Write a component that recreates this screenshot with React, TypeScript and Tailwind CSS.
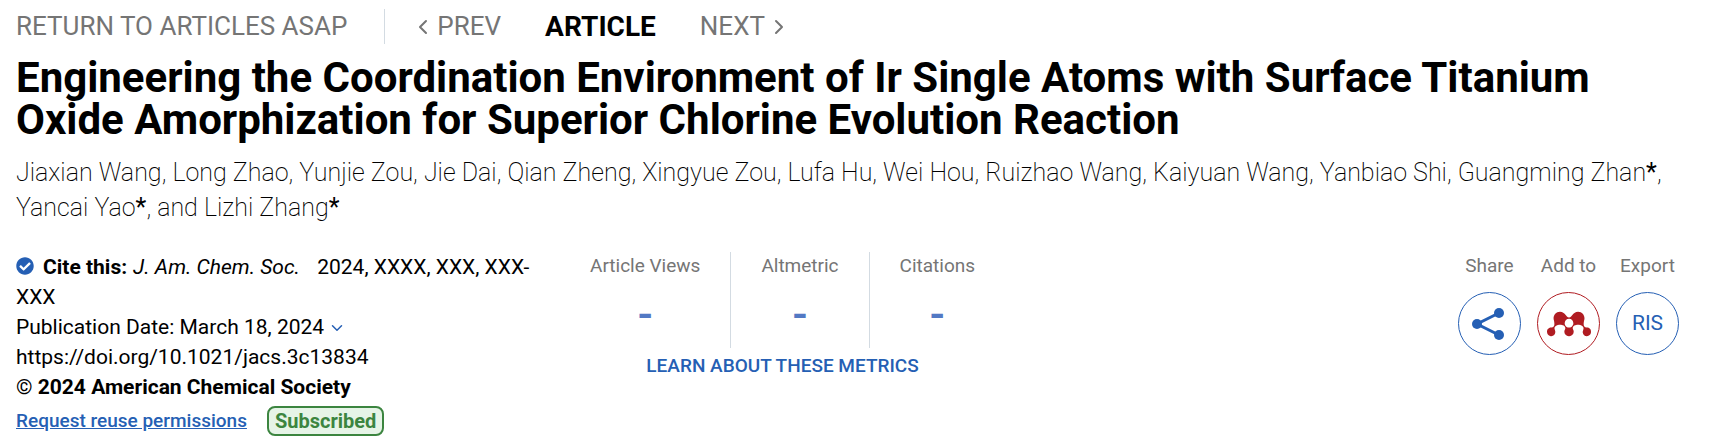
import { FaCheckCircle, FaMendeley } from "react-icons/fa";
import { ChevronDown, ChevronLeft, ChevronRight } from "lucide-react";

const authors = [
    { name: "Jiaxian Wang" },
    { name: "Long Zhao" },
    { name: "Yunjie Zou" },
    { name: "Jie Dai" },
    { name: "Qian Zheng" },
    { name: "Xingyue Zou" },
    { name: "Lufa Hu" },
    { name: "Wei Hou" },
    { name: "Ruizhao Wang" },
    { name: "Kaiyuan Wang" },
    { name: "Yanbiao Shi" },
    { name: "Guangming Zhan", corresponding: true },
    { name: "Yancai Yao", corresponding: true },
    { name: "Lizhi Zhang", corresponding: true },
];

const metrics = ["Article Views", "Altmetric", "Citations"];

function ShareIcon() {
    return (
        <svg viewBox="0 0 36 36" className="h-9 w-9" fill="currentColor" aria-hidden="true">
            <path d="M27 7 5 18l22 11" fill="none" stroke="currentColor" strokeWidth="3" />
            <circle cx="27" cy="7" r="5" />
            <circle cx="5" cy="18" r="5" />
            <circle cx="27" cy="29" r="5" />
        </svg>
    );
}

function ArticleNav() {
    return (
        <nav className="flex h-[35px] items-center text-[26px] leading-[35px] text-[#757575]">
            <a href="#asap">RETURN TO ARTICLES ASAP</a>
            <span className="ml-[37px] h-full w-px bg-[#d3dbe2]" />
            <a href="#prev" className="ml-[26px] flex items-center gap-[2px]">
                <ChevronLeft className="h-6 w-6" strokeWidth={2} />
                PREV
            </a>
            <span className="ml-11 text-[28px] font-bold text-black">ARTICLE</span>
            <a href="#next" className="ml-11 flex items-center gap-[2px]">
                NEXT
                <ChevronRight className="h-6 w-6" strokeWidth={2} />
            </a>
        </nav>
    );
}

function Citation() {
    return (
        <div className="w-[544px] pr-5 text-[21px] leading-[30px]">
            <p>
                <FaCheckCircle className="mr-[9px] inline h-[18px] w-[18px] align-[-1px] text-[#255fb4]" />
                <strong className="font-bold">Cite this:</strong>
                <em className="ml-[6px]">J. Am. Chem. Soc.</em>
                <span className="ml-3"> 2024, XXXX, XXX, XXX-XXX</span>
            </p>
            <p>
                Publication Date: March 18, 2024
                <button type="button" aria-label="Publication history" className="ml-1 text-[#255fb4]">
                    <ChevronDown className="inline h-[18px] w-[18px]" strokeWidth={2} />
                </button>
            </p>
            <p>
                <a href="https://doi.org/10.1021/jacs.3c13834">https://doi.org/10.1021/jacs.3c13834</a>
            </p>
            <p>
                © <strong className="font-bold">2024 American Chemical Society</strong>
            </p>
            <div className="mt-1 flex items-center">
                <a href="#permissions" className="text-[19px] font-medium text-[#255fb4] underline">
                    Request reuse permissions
                </a>
                <span className="ml-5 rounded-lg border-2 border-[#3c8540] bg-[#e6f4e7] px-[6px] text-[20px] leading-[26px] font-bold text-[#3c8540]">
                    Subscribed
                </span>
            </div>
        </div>
    );
}

function Metrics() {
    return (
        <div className="flex flex-col items-center">
            <dl className="flex divide-x divide-[#d3dbe2]">
                {metrics.map((label) => (
                    <div key={label} className="flex h-24 flex-col items-center px-[30px]">
                        <dt className="text-[19px] leading-[27px] text-[#757575]">{label}</dt>
                        <dd className="mt-3 text-[44px] leading-[46px] font-medium text-[#5379c4]">-</dd>
                    </div>
                ))}
            </dl>
            <a href="#metrics" className="mt-1 text-[19px] leading-[28px] font-medium text-[#255fb4]">
                LEARN ABOUT THESE METRICS
            </a>
        </div>
    );
}

function Actions() {
    const circle = "flex h-[63px] w-[63px] items-center justify-center rounded-full border";
    return (
        <div className="ml-auto flex gap-4 text-[19px] leading-[27px] text-[#757575]">
            <div className="flex flex-col items-center gap-[13px]">
                <span id="share">Share</span>
                <button type="button" aria-labelledby="share" className={`${circle} border-[#255fb4] text-[#255fb4]`}>
                    <ShareIcon />
                </button>
            </div>
            <div className="flex flex-col items-center gap-[13px]">
                <span id="add-to">Add to</span>
                <button type="button" aria-labelledby="add-to" className={`${circle} border-[#b01c22] text-[#b01c22]`}>
                    <FaMendeley className="h-11 w-11" />
                </button>
            </div>
            <div className="flex flex-col items-center gap-[13px]">
                <span id="export">Export</span>
                <button type="button" className={`${circle} border-[#255fb4] text-[21px] text-[#255fb4]`}>
                    RIS
                </button>
            </div>
        </div>
    );
}

export default function App() {
    return (
        <main className="bg-white pt-[9px] pr-11 pb-2 pl-4 font-[Roboto,sans-serif] text-black">
            <ArticleNav />
            <h1 className="mt-[13px] text-[42px] leading-[42px] font-bold">
                Engineering the Coordination Environment of Ir Single Atoms with Surface Titanium Oxide Amorphization for
                Superior Chlorine Evolution Reaction
            </h1>
            <p className="mt-[14px] text-[25px] leading-[35px] font-extralight">
                {authors.map((author, i) => (
                    <span key={author.name}>
                        {i > 0 && ", "}
                        {i === authors.length - 1 && "and "}
                        {author.name}
                        {author.corresponding && <span className="font-normal">*</span>}
                    </span>
                ))}
            </p>
            <div className="mt-[27px] flex items-start">
                <Citation />
                <Metrics />
                <Actions />
            </div>
        </main>
    );
}
